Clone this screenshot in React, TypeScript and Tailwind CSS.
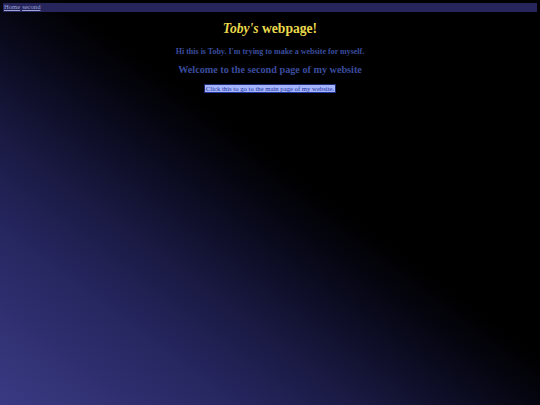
export default function App() {
  return (
    <div
      className="min-h-[405px] w-full bg-[linear-gradient(to_top_right,#3a3a84_0%,#262660_22%,#1a1a44_33%,#0e0e28_42%,#050510_50%,#000000_56%)] p-[3px] text-center"
      style={{ fontFamily: '"Liberation Serif", "Times New Roman", serif' }}
    >
      {/* nav */}
      <div className="flex h-[9px] items-center gap-[2px] bg-[#26265c] px-[1px] text-left text-[6.6px] leading-none">
        <a href="#" className="text-[#9ea3d6] underline">Home</a>
        <a href="#" className="text-[#9ea3d6] underline">second</a>
      </div>

      <h1 className="mt-[8px] text-[13.6px] font-bold leading-[17px] text-[#e9d84c]">
        <i>Toby's</i> webpage!
      </h1>
      <p className="mt-[10px] text-[8px] font-bold leading-[10px] text-[#3a4c9e]">
        Hi this is Toby. I'm trying to make a website for myself.
      </p>
      <h2 className="mt-[6px] text-[10.2px] font-bold leading-[13px] text-[#3a4c9e]">
        Welcome to the second page of my website
      </h2>
      <div className="mt-[8px] flex justify-center">
        <a
          href="#"
          className="block border border-[#1c2a70] bg-[#a5b4fb] px-[1px] text-[6.7px] leading-[7px] text-[#2236a0] underline"
        >
          Click this to go to the main page of my website.
        </a>
      </div>
    </div>
  );
}
